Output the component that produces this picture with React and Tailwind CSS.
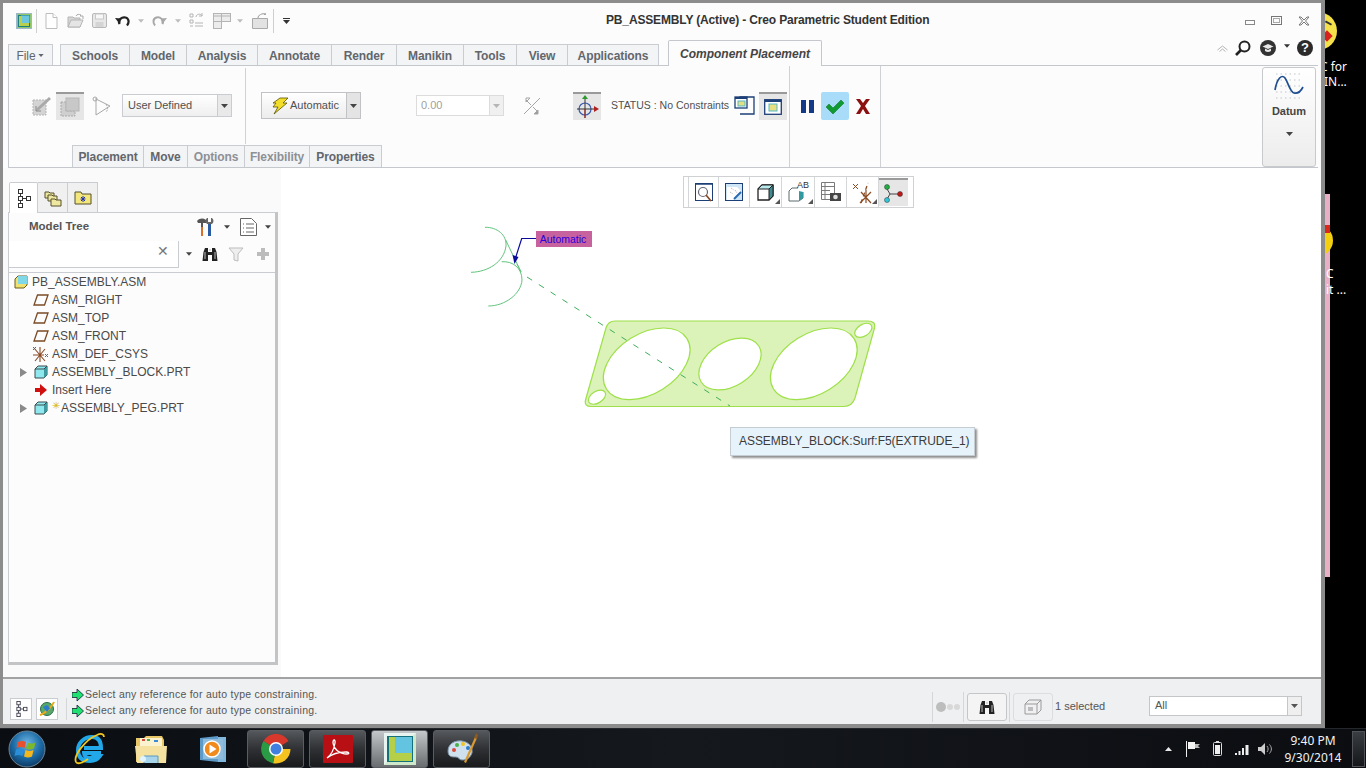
import React from "react";

const Caret = ({ c = "#444", w = 7, h = 4, className = "" }) => (
  <svg width={w} height={h} viewBox="0 0 7 4" className={className}><path d="M0 0h7L3.5 4z" fill={c} /></svg>
);

function CreoLogo({ size = 16 }) {
  return (
    <svg width={size} height={size} viewBox="0 0 16 16">
      <rect x="0.5" y="0.5" width="15" height="15" fill="#8fc66a" stroke="#9fb8c8" />
      <rect x="2" y="2" width="12" height="12" fill="#1c7f7f" />
      <rect x="5" y="2.5" width="8.5" height="7.5" fill="#6cc6e0" />
      <path d="M3 3v10h10v-3H6V3z" fill="#b9cf4e" />
    </svg>
  );
}

function Binoculars({ c = "#222" }) {
  return (
    <svg width="16" height="16" viewBox="0 0 16 16">
      <path d="M1.500 6L3 2h3v4h4V2h3l1.500 4 1 9H10V9H6v6H.5z" fill={c} />
      <path d="M3 6v7M13 6v7M7 4h2" stroke="#bbb" strokeWidth="1" />
    </svg>
  );
}

function TreeGlyph() {
  return (
    <svg width="14" height="19" viewBox="0 0 14 19" fill="none" stroke="#333">
      <rect x="1.5" y="0.5" width="4" height="4" />
      <rect x="1.5" y="7.5" width="4" height="4" />
      <rect x="1.5" y="14.5" width="4" height="4" />
      <rect x="9.5" y="7.5" width="4" height="4" />
      <path d="M3.5 4.5v3M3.5 11.5v3M5.5 9.5h4" />
    </svg>
  );
}

function Cube({ size = 14 }) {
  return (
    <svg width={size} height={size} viewBox="0 0 14 14">
      <path d="M1 4l3-3h9v9l-3 3H1z" fill="#8fe8ee" stroke="#3c4a4c" />
      <path d="M10 4v9l3-3V1z" fill="#3f9aa0" />
      <path d="M1 4h9l3-3" fill="none" stroke="#3c4a4c" />
    </svg>
  );
}

function PlaneIcon() {
  return (
    <svg width="16" height="12" viewBox="0 0 16 12" fill="none">
      <path d="M4.5 1H15l-3.5 10H1z" stroke="#7a4a24" strokeWidth="1.3" />
    </svg>
  );
}

function CsysIcon({ size = 17 }) {
  return (
    <svg width={size} height={size} viewBox="0 0 17 17" fill="none">
      <path d="M2 2l11 13M13 3L3 15M8 1v15M1 9h11" stroke="#8a4a24" strokeWidth="1.1" />
      <path d="M1 1l3 3M4 1L1 4M13 8l3 3M16 8l-3 3" stroke="#666" />
    </svg>
  );
}

function TreeRow({ icon, label, arrow, star }) {
  return (
    <div className="flex items-center h-[18px] pl-[10px]">
      <div className="w-[8px] flex justify-center">
        {arrow && <svg width="7" height="9" viewBox="0 0 7 9"><path d="M0 0l7 4.5L0 9z" fill="#8a8a8a" /></svg>}
      </div>
      <div className="ml-[4px] w-[19px] flex justify-center">{icon}</div>
      {star ? (
        <span className="ml-[2px] text-[10px] leading-none text-[#d8b400] w-[9px] -mt-1">✳</span>
      ) : (
        <span className="w-[2px]" />
      )}
      <span className="text-[12px] text-[#4a4a4a] whitespace-nowrap">{label}</span>
    </div>
  );
}

function QuickBar() {
  return (
    <div className="flex items-center h-full pl-[13px] pb-[2px]">
      <CreoLogo />
      <div className="w-px h-[24px] bg-[#cfcfcf] ml-[4px]" />
      <svg className="ml-[8px]" width="13" height="16" viewBox="0 0 13 16" fill="#fff" stroke="#bdbdbd"><path d="M1 .5h7l4 4v11H1z" /><path d="M8 .5v4h4" /></svg>
      <svg className="ml-[9px]" width="17" height="15" viewBox="0 0 17 15"><path d="M1 4h5l1 1h6v9H1z" fill="#d6d6d6" stroke="#b5b5b5" /><path d="M4 7h12l-3 7H1z" fill="#e5e5e5" stroke="#b5b5b5" /><path d="M9 3c1-2 3-2 5-1l-1 1h3v3" fill="none" stroke="#aaa" /></svg>
      <svg className="ml-[8px]" width="15" height="15" viewBox="0 0 15 15"><rect x=".5" y=".5" width="14" height="14" rx="1.5" fill="#e8e8e8" stroke="#b8b8b8" /><rect x="3.5" y="1" width="8" height="5" fill="#f7f7f7" stroke="#c8c8c8" /><rect x="3.5" y="9" width="8" height="5" fill="#d4d4d4" /></svg>
      <svg className="ml-[8px]" width="15" height="12" viewBox="0 0 15 12" fill="none"><path d="M4.5 9C2.5 5 7 1.5 10.5 2.5c3.5 1 4 5 1.500 8" stroke="#222" strokeWidth="2.2" /><path d="M0 3l6 0.500-1 6z" fill="#222" /></svg>
      <Caret c="#bdbdbd" w={6} h={4} className="ml-[8px]" />
      <svg className="ml-[8px]" width="15" height="12" viewBox="0 0 15 12" fill="none"><path d="M10.500 9C12.500 5 8 1.500 4.500 2.500c-3.500 1-4 5-1.500 8" stroke="#a8a8a8" strokeWidth="2" /><path d="M15 3l-6 .5 1 6z" fill="#a8a8a8" /></svg>
      <Caret c="#bdbdbd" w={6} h={4} className="ml-[8px]" />
      <svg className="ml-[8px]" width="15" height="17" viewBox="0 0 15 17" fill="none" stroke="#b4b4b4"><path d="M1 2h3v3H1zM1 8h3v3H1zM1 14h3M6 14h8M6 11h8M7 5c0-3 5-4 6-1M13 1v3h-3" /></svg>
      <svg className="ml-[9px]" width="18" height="16" viewBox="0 0 18 16" fill="#ececec" stroke="#b4b4b4"><rect x=".5" y=".5" width="9" height="8" /><rect x="8.500" y=".5" width="9" height="8" /><rect x=".5" y="8.500" width="8" height="7" /><path d="M1 3h8M9 3h8" /></svg>
      <Caret c="#bdbdbd" w={6} h={4} className="ml-[6px]" />
      <svg className="ml-[9px]" width="16" height="16" viewBox="0 0 16 16"><path d="M.5 5.500h15v10H.5z" fill="#e2e2e2" stroke="#aaa" /><path d="M6 5c0-3 4-5 8-4l-2 .5" fill="none" stroke="#999" /></svg>
      <div className="w-px h-[24px] bg-[#cfcfcf] ml-[5px]" />
      <div className="ml-[9px] flex flex-col items-center gap-[1px]">
        <div className="w-[7px] h-[1px] bg-[#333]" />
        <Caret c="#333" />
      </div>
    </div>
  );
}

function Tab({ w, children, dim }) {
  return (
    <div className={`h-[22px] ${w} flex items-center justify-center border-l border-t border-[#c9ccd0] bg-[#f3f4f5] text-[12px] tracking-[-0.1px] font-bold ${dim ? "text-[#8d9096]" : "text-[#62666d]"}`}>
      {children}
    </div>
  );
}

function TabRow() {
  return (
    <div className="h-[26px] flex items-end pl-[5px] pr-[5px] relative">
      <div className="absolute left-[5px] right-[3px] bottom-0 h-px bg-[#c4c7cb]" />
      <div className="flex border-r border-[#c9ccd0]"><Tab w="w-[44px]"><span className="flex items-center gap-[3px] font-normal">File <Caret c="#62666d" w={6} h={3} /></span></Tab></div>
      <div className="flex ml-[7px] border-r border-[#c9ccd0]">
        <Tab w="w-[69px]">Schools</Tab>
        <Tab w="w-[57px]">Model</Tab>
        <Tab w="w-[71px]">Analysis</Tab>
        <Tab w="w-[74px]">Annotate</Tab>
        <Tab w="w-[65px]">Render</Tab>
        <Tab w="w-[67px]">Manikin</Tab>
        <Tab w="w-[53px]">Tools</Tab>
        <Tab w="w-[51px]">View</Tab>
        <Tab w="w-[91px]">Applications</Tab>
      </div>
      <div className="relative ml-[9px] h-[26px] w-[154px] flex items-center justify-center border border-b-0 border-[#c4c7cb] bg-[#fcfcfc] rounded-t-[2px] text-[12px] font-bold italic text-[#454545]">
        Component Placement
      </div>
      <div className="flex items-center ml-auto h-[22px] mb-[7px] pr-[3px]">
        <svg width="11" height="7" viewBox="0 0 11 7" fill="none" stroke="#b5b5b5"><path d="M.5 5L5.500 1l5 4M2.500 6.500l3-2.500 3 2.500" /></svg>
        <svg className="ml-[7px]" width="16" height="16" viewBox="0 0 16 16" fill="none" stroke="#222"><circle cx="9.500" cy="6.500" r="5" strokeWidth="2" /><path d="M6 10l-5 5" strokeWidth="2.600" /></svg>
        <svg className="ml-[9px]" width="16" height="16" viewBox="0 0 16 16"><circle cx="8" cy="8" r="8" fill="#333" /><path d="M2.500 6.500L8 4l5.500 2.500L8 9z" fill="#e8e8e8" /><path d="M5 8.500v2.500c2 1.300 4 1.300 6 0V8.500L8 10z" fill="#e8e8e8" /></svg>
        <Caret c="#333" w={6} h={4} className="ml-[8px] -mt-[5px]" />
        <div className="ml-[7px] w-[16px] h-[16px] rounded-full bg-[#2b2b2b] text-white text-[13px] font-bold leading-[16px] text-center">?</div>
      </div>
    </div>
  );
}

function Pressed({ children }) {
  return (
    <div className="w-[28px] h-[28px] flex items-center justify-center bg-[#e6e6e7] border-t-2 border-[#9a9a9a]">{children}</div>
  );
}

function Ribbon() {
  return (
    <div className="h-[102px] flex ml-[5px] mr-[3px] border-l border-b border-[#c4c7cb] bg-[#fcfcfc]">
      <div className="w-[780px] flex flex-col">
        <div className="h-[79px] flex items-center">
          <svg className="ml-[23px]" width="20" height="20" viewBox="0 0 20 20"><path d="M1 4h13v15H1z" fill="#d4d4d4" stroke="#b5b5b5" strokeDasharray="2 1" /><path d="M5 12L17 1l2 2L7 14l-3 1z" fill="#a9a9a9" /><path d="M4 10v5h5" fill="none" stroke="#888" /></svg>
          <div className="ml-[4px]">
            <Pressed>
              <svg width="20" height="20" viewBox="0 0 20 20"><path d="M1 5h5v9h9v5H1z" fill="#cfcfcf" stroke="#aaa" strokeDasharray="2 1" /><rect x="6" y="1" width="13" height="13" fill="#c8c8c8" stroke="#b5b5b5" /></svg>
            </Pressed>
          </div>
          <svg className="ml-[8px]" width="20" height="20" viewBox="0 0 20 20" fill="none" stroke="#a8a8a8"><circle cx="3" cy="3" r="2" /><path d="M4 2v17M4 3l14 7-14 9" /><path d="M14 8c2 3 2 6 0 8" strokeDasharray="2 1" /></svg>
          <div className="ml-[10px] w-[110px] h-[23px] flex border border-[#c9ccd0] bg-gradient-to-b from-white to-[#efefef]">
            <span className="flex-1 px-[5px] text-[11px] leading-[21px] text-[#505050]">User Defined</span>
            <div className="w-[14px] border-l border-[#c9ccd0] bg-[#e9e9ea] flex items-center justify-center"><Caret /></div>
          </div>
          <div className="w-px h-[76px] ml-[13px] bg-[#cfd1d4]" />
          <div className="ml-[15px] w-[100px] h-[27px] flex border border-[#c0c2c6] bg-gradient-to-b from-white to-[#ececec]">
            <span className="flex-1 flex items-center pl-[9px] gap-[1px] text-[11px] text-[#505050]">
              <svg width="18" height="20" viewBox="0 0 18 18"><path d="M9 1h8L12 6h4L3 17l4-7H2l3-4H2z" fill="#f2de2a" stroke="#5a5200" strokeWidth=".8" /></svg>
              Automatic
            </span>
            <div className="w-[14px] border-l border-[#c0c2c6] bg-[#e4e4e5] flex items-center justify-center"><Caret /></div>
          </div>
          <div className="ml-[55px] w-[88px] h-[21px] flex border border-[#dcdcdc] bg-white">
            <span className="flex-1 pl-[4px] text-[11px] leading-[19px] text-[#a0a0a0]">0.00</span>
            <div className="w-[14px] border-l border-[#dcdcdc] bg-[#f0f0f0] flex items-center justify-center"><Caret c="#b5b5b5" /></div>
          </div>
          <svg className="ml-[19px]" width="18" height="18" viewBox="0 0 18 18" fill="none" stroke="#a5a5a5"><path d="M1 17L17 1" /><path d="M3 1h4L3 5zM3 3l5 5" /><path d="M15 17h-4l4-4zM15 15l-5-5" fill="#9b9b9b" /></svg>
          <div className="ml-[32px]">
            <Pressed>
              <svg width="24" height="26" viewBox="0 0 24 26" fill="none"><circle cx="10" cy="15" r="6" stroke="#3a5ab0" strokeWidth="1.200" /><path d="M10 2v22" stroke="#333" /><path d="M2 15h20" stroke="#333" /><path d="M7 5l3-4 3 4z" fill="#2a9a2a" /><path d="M19 12l5 3-5 3z" fill="#b02020" /><path d="M10 15v9" stroke="#b02020" /></svg>
            </Pressed>
          </div>
          <span className="ml-[10px] text-[10.5px] text-[#505050] w-[122px] whitespace-nowrap">STATUS : No Constraints</span>
          <svg className="ml-[1px]" width="21" height="19" viewBox="0 0 21 19" fill="none"><path d="M6 5V1h14v17H6" stroke="#1c3f77" strokeWidth="1.300" /><rect x="1" y="1" width="12" height="11" fill="#fff" stroke="#1c3f77" strokeWidth="1.300" /><rect x="1" y="1" width="12" height="2" fill="#1c3f77" /><rect x="4" y="5" width="7" height="5" fill="#e6df80" stroke="#55b8c8" /></svg>
          <div className="ml-[4px]">
            <Pressed>
              <svg width="18" height="16" viewBox="0 0 18 16"><rect x=".7" y=".7" width="16.600" height="14.600" fill="#fff" stroke="#1c3f77" strokeWidth="1.300" /><rect x="1" y="1" width="16" height="2" fill="#1c3f77" /><rect x="5" y="5" width="8" height="7" fill="#e6df80" stroke="#55b8c8" /></svg>
            </Pressed>
          </div>
        </div>
        <div className="flex-1 flex items-end pl-[63px]">
          <div className="flex border-r border-[#c9ccd0]">
            <Tab w="w-[71px]">Placement</Tab>
            <Tab w="w-[44px]">Move</Tab>
            <Tab w="w-[57px]" dim>Options</Tab>
            <Tab w="w-[65px]" dim>Flexibility</Tab>
            <Tab w="w-[72px]">Properties</Tab>
          </div>
        </div>
      </div>
      <div className="w-[92px] border-l border-r border-[#cfd1d4] flex items-start pt-[26px]">
        <div className="ml-[11px] mt-[8px] flex gap-[3px]">
          <div className="w-[5px] h-[13px] bg-[#133a86]" />
          <div className="w-[5px] h-[13px] bg-[#133a86]" />
        </div>
        <div className="ml-[7px] w-[28px] h-[28px] rounded-[2px] bg-[#a9dcf8] flex items-center justify-center">
          <svg width="20" height="15" viewBox="0 0 20 15"><path d="M1 8l3-3 4 4 8-8 3 3-11 11z" fill="#0f9a32" stroke="#0b6a20" strokeWidth=".5" /></svg>
        </div>
        <svg className="ml-[6px] mt-[7px]" width="16" height="15" viewBox="0 0 16 15"><path d="M1 0h4l3 4 3-4h4l-5 7 5 8h-4l-3-5-3 5H1l5-8z" fill="#8c1010" /></svg>
      </div>
      <div className="flex-1" />
      <div className="w-[54px] mt-[1px] mr-[2px] rounded-[3px] border border-[#c8c9cc] bg-gradient-to-b from-white to-[#ececec] flex flex-col items-center">
        <svg className="mt-[4px]" width="30" height="28" viewBox="0 0 30 28" fill="none">
          <path d="M2 2h26M2 8h26M2 14h26M2 20h26M2 26h26" stroke="#c0c4c8" strokeDasharray="1.500 3" />
          <path d="M1 18C3 6 8 2 11 6s5 14 9 15 7-2 9-6" stroke="#1f4f92" strokeWidth="1.700" />
        </svg>
        <span className="mt-[3px] text-[11px] font-bold text-[#444]">Datum</span>
        <Caret className="mt-[12px]" c="#444" />
      </div>
    </div>
  );
}

function TreePanel() {
  return (
    <div className="w-[278px] bg-[#fafafa] pl-[5px] pt-[14px] pb-[12px] flex flex-col">
      <div className="flex h-[30px] pl-[1px]">
        <div className="w-[29px] h-[31px] flex items-center justify-center border border-b-0 border-[#c9ccd0] rounded-t-[2px] bg-white z-10"><TreeGlyph /></div>
        <div className="w-[30px] flex items-center justify-center border-t border-r border-[#c9ccd0] bg-[#f0f0f1]">
          <svg width="18" height="18" viewBox="0 0 18 18" fill="#efe7a0" stroke="#55502a"><path d="M1 3h4l1 1h4v5H1z" /><path d="M4 6h4l1 1h4v5H4z" /><path d="M7 10h4l1 1h5v6H7z" /></svg>
        </div>
        <div className="w-[30px] flex items-center justify-center border-t border-r border-[#c9ccd0] bg-[#f0f0f1]">
          <svg width="18" height="15" viewBox="0 0 18 15"><path d="M1 2h6l1 2h9v10H1z" fill="#f3e67a" stroke="#55502a" /><path d="M9 6v6M6.500 9h5M7 7l4 4M11 7l-4 4" stroke="#2233aa" /></svg>
        </div>
      </div>
      <div className="flex-1 w-[270px] flex flex-col border-l border-t border-[#c9ccd0] border-r-[3px] border-b-[3px] border-r-[#c2c4c6] border-b-[#c2c4c6] bg-[#fcfcfc]">
        <div className="h-[28px] flex items-center">
          <span className="ml-[20px] text-[11.500px] font-bold text-[#555]">Model Tree</span>
          <svg className="ml-[107px]" width="20" height="20" viewBox="0 0 20 20"><path d="M1 4c3-3 6-3 9-1v3H7v13H5V6H2z" fill="#555" /><path d="M5 10h2v9H5z" fill="#d8702a" /><path d="M12 6h3v13h-3z" fill="#2a5aa0" /><path d="M11 1h1v4h3V1h1c2 2 2 4 0 6h-5c-2-2-2-4 0-6z" fill="#666" /></svg>
          <Caret c="#444" w={6} h={4} className="ml-[8px]" />
          <svg className="ml-[10px]" width="17" height="18" viewBox="0 0 17 18" fill="#fff" stroke="#666"><path d="M.5.5h11l5 5v12H.5z" /><path d="M3 6h1M6 6h8M3 10h1M6 10h8M3 14h1M6 14h8" /></svg>
          <Caret c="#444" w={6} h={4} className="ml-[8px]" />
        </div>
        <div className="h-[32px] flex items-center border-b border-[#c9ccd0] pb-[5px]">
          <div className="w-[170px] h-[27px] bg-white border-r border-b border-[#c9ccd0] flex justify-end pr-[9px] pt-[2px] text-[#777] text-[14px] leading-[16px]">✕</div>
          <Caret c="#444" w={6} h={4} className="ml-[7px]" />
          <div className="ml-[10px] flex"><Binoculars /></div>
          <svg className="ml-[10px]" width="16" height="15" viewBox="0 0 16 15" fill="#eee" stroke="#bdbdbd"><path d="M1 1h14L10 7v7l-4-1V7z" /></svg>
          <svg className="ml-[13px]" width="12" height="12" viewBox="0 0 12 12"><path d="M4 0h4v4h4v4H8v4H4V8H0V4h4z" fill="#bcbcbc" /></svg>
        </div>
        <div>
          <div className="flex items-center h-[18px] pl-[5px]">
            <svg width="14" height="14" viewBox="0 0 14 14"><path d="M1 4l3-3h9v9l-3 3H1z" fill="#f0e070" stroke="#6a5a18" /><path d="M4 1v8h9V1z" fill="#7fd8e8" /></svg>
            <span className="ml-[4px] text-[12px] text-[#4a4a4a]">PB_ASSEMBLY.ASM</span>
          </div>
          <TreeRow icon={<PlaneIcon />} label="ASM_RIGHT" />
          <TreeRow icon={<PlaneIcon />} label="ASM_TOP" />
          <TreeRow icon={<PlaneIcon />} label="ASM_FRONT" />
          <TreeRow icon={<CsysIcon />} label="ASM_DEF_CSYS" />
          <TreeRow arrow icon={<Cube />} label="ASSEMBLY_BLOCK.PRT" />
          <TreeRow icon={<svg width="12" height="12" viewBox="0 0 12 12"><path d="M0 4h5V0l7 6-7 6V8H0z" fill="#d01010" /></svg>} label="Insert Here" />
          <TreeRow arrow star icon={<Cube />} label="ASSEMBLY_PEG.PRT" />
        </div>
      </div>
    </div>
  );
}

const Corner = () => (
  <svg className="absolute right-[1px] bottom-[3px]" width="5" height="5" viewBox="0 0 5 5"><path d="M5 0v5H0z" fill="#555" /></svg>
);

function GraphicsBar() {
  const cell = "flex items-center justify-center border-r border-[#d5d6d8] h-full";
  return (
    <div className="absolute left-[402px] top-[8px] h-[32px] w-[231px] flex items-center border border-[#d0d1d3] bg-white pl-[4px] pr-[5px]">
      <div className={`${cell} w-[31px] border-l`}>
        <svg width="18" height="19" viewBox="0 0 18 19" fill="none"><rect x=".5" y=".5" width="17" height="17" stroke="#1c3f77" /><path d="M1 1h16" stroke="#1c3f77" strokeWidth="1.500" /><circle cx="8" cy="9" r="4.500" stroke="#667" strokeWidth="1.200" /><path d="M11 12l5 6" stroke="#8a4a24" strokeWidth="1.700" /></svg>
      </div>
      <div className={`${cell} w-[31px]`}>
        <svg width="18" height="18" viewBox="0 0 18 18"><rect x=".5" y=".5" width="17" height="17" fill="#cfe6f6" stroke="#1c3f77" /><path d="M2 4h10l4 4-8 9H2z" fill="#fff" /><path d="M6 5l3 2M10 7l2 3M5 9l3 2" stroke="#aaa" strokeDasharray="1 1" /><path d="M9 16l7-7" stroke="#2a6ab0" strokeWidth="2" /></svg>
      </div>
      <div className={`${cell} w-[32px] relative`}>
        <svg width="17" height="17" viewBox="0 0 17 17"><path d="M1 5l4-4h11v11l-4 4H1z" fill="#fff" stroke="#222" strokeWidth="1.300" /><path d="M1 5h11l4-4H5z" fill="#b7e8ec" stroke="#222" /><path d="M12 5v11l4-4V1z" fill="#3f8a90" stroke="#222" /></svg>
        <Corner />
      </div>
      <div className={`${cell} w-[33px] relative`}>
        <svg width="21" height="19" viewBox="0 0 21 19" fill="none"><path d="M1 8l3-3h6M1 8v10h10l4-3V9" stroke="#5a6a6c" /><path d="M11 8v10l4-3V9z" fill="#2f9aa0" /></svg>
        <span className="absolute left-[15px] top-[4px] text-[9px] leading-none text-[#333]">AB</span>
        <Corner />
      </div>
      <div className={`${cell} w-[32px]`}>
        <svg width="20" height="20" viewBox="0 0 20 20" fill="none"><path d="M.5.5h13v17H.5zM1 4.500h12M1 8.500h8M1 12.500h8M4 1v16" stroke="#7a7a7a" /><rect x="9" y="11" width="11" height="8" fill="#444" /><circle cx="14.500" cy="15" r="2.300" fill="#ddd" /></svg>
      </div>
      <div className={`${cell} w-[32px] relative`}>
        <svg width="22" height="23" viewBox="0 0 22 23" fill="none"><path d="M9 22L16 2" stroke="#8a4a24" strokeDasharray="4 3" strokeWidth="1.300" /><path d="M9 11l10 11M19 11L8 22M14 9v13" stroke="#8a4a24" strokeWidth="1.200" /><path d="M1 3l5 5M6 3L1 8" stroke="#8a4a24" /></svg>
        <Corner />
      </div>
      <div className="w-[29px] h-[28px] flex items-center justify-center bg-[#e6e6e7] border-t-2 border-[#9a9a9a]">
        <svg width="20" height="21" viewBox="0 0 20 21" fill="none"><path d="M3 6l3 5-3 5M6 11h9" stroke="#444" /><circle cx="3" cy="4" r="2.500" fill="#20b040" stroke="#333" strokeWidth=".5" /><circle cx="3" cy="17" r="2.500" fill="#30c8d8" stroke="#333" strokeWidth=".5" /><circle cx="16" cy="11" r="2.500" fill="#c01818" stroke="#333" strokeWidth=".5" /></svg>
      </div>
    </div>
  );
}

function ModelSketch() {
  return (
    <svg className="absolute left-0 top-0" width="1040" height="509" viewBox="281 168 1040 509" fill="none">
      <path
        d="M615 321H868Q876 321 874.500 328L855 398Q852 406.500 844 406.500H591Q584 406.500 585.500 400L606 328Q608 321 615 321Z"
        fill="#dbf2b8"
        stroke="#9ee04a"
        strokeWidth="1.200"
      />
      {[
        [646.7, 363.8, 47.5, 30],
        [730, 364, 34, 22],
        [813.8, 363.8, 47.5, 30],
        [863.3, 330.3, 9.5, 5.8],
        [597, 397.2, 9.5, 5.8],
      ].map(([cx, cy, rx, ry]) => (
        <ellipse key={cx} cx={cx} cy={cy} rx={rx} ry={ry} transform={`rotate(-32 ${cx} ${cy})`} fill="#fff" stroke="#9ee04a" strokeWidth="1.200" />
      ))}
      <path d="M527 277L730 406" stroke="#3fae5c" strokeDasharray="6 8" />
      <path d="M485 227.300C497 227 507 235 506 246C504 262 488 272 471 272.300" stroke="#62c47c" />
      <path d="M501.700 261.700C513 261 522 268 522 280C521 294 505 306 488.300 306" stroke="#62c47c" />
      <path d="M505.700 240L521 272M517 264L521 272" stroke="#62c47c" />
      <path d="M536 238.500H521.700L515.500 258" stroke="#0a0a9a" strokeWidth="1.200" />
      <path d="M512.500 255L518.500 257L514.500 264Z" fill="#0a0a9a" />
    </svg>
  );
}

function Canvas() {
  return (
    <div className="flex-1 bg-white relative">
      <GraphicsBar />
      <ModelSketch />
      <div className="absolute left-[255px] top-[63px] w-[56px] h-[16px] bg-[#c8629f] text-[#2a00d8] text-[10.500px] leading-[16px] pr-[2px] text-center">Automatic</div>
      <div className="absolute left-[449px] top-[259px] w-[245px] h-[29px] bg-[#e6f3fb] border border-[#c6cdd2] shadow-[2px_2px_2px_#8f8f8f] text-[12px] tracking-[-0.06px] leading-[26px] pl-[8px] text-[#3b3b3b] whitespace-nowrap">
        ASSEMBLY_BLOCK:Surf:F5(EXTRUDE_1)
      </div>
    </div>
  );
}

function MsgLine() {
  return (
    <div className="flex items-center h-[16px]">
      <svg width="12" height="12" viewBox="0 0 12 12"><path d="M0 3.500h5V0l6.500 6L5 12V8.500H0z" fill="#1fe070" stroke="#123" strokeWidth=".8" /></svg>
      <span className="ml-[1px] text-[10.500px] tracking-[0.26px] text-[#555] whitespace-nowrap">Select any reference for auto type constraining.</span>
    </div>
  );
}

function StatusBar() {
  return (
    <div className="h-[47px] border-t-2 border-[#a2a2a2] bg-[#eef0f1] flex relative">
      <div className="flex items-end pb-[4px] pl-[7px]">
        <div className="w-[22px] h-[22px] border border-[#c9ccd0] bg-white flex items-center justify-center">
          <svg width="13" height="16" viewBox="0 0 14 19" fill="none" stroke="#334"><rect x="1.500" y=".5" width="4" height="4" /><rect x="1.500" y="7.500" width="4" height="4" /><rect x="1.500" y="14.500" width="4" height="4" /><rect x="9.500" y="7.500" width="4" height="4" /><path d="M3.500 4.500v3M3.500 11.500v3M5.500 9.500h4" /></svg>
        </div>
        <div className="w-[22px] h-[22px] ml-[4px] border border-[#c9ccd0] bg-white flex items-center justify-center">
          <svg width="18" height="18" viewBox="0 0 18 18"><circle cx="9" cy="9" r="6.500" fill="#58a86a" stroke="#2a6a4a" /><path d="M2 15C6 14 14 7 16 2" stroke="#e8a818" strokeWidth="2" fill="none" /><path d="M5 7l4-2 3 3-3 4z" fill="#2a7ad0" /></svg>
        </div>
        <div className="w-px h-[22px] ml-[8px] bg-[#d5d6d8]" />
      </div>
      <div className="ml-[5px] pt-[8px] flex flex-col">
        <MsgLine />
        <MsgLine />
      </div>
      <div className="flex-1" />
      <div className="flex items-center h-full pt-[10px]">
        <div className="w-px h-[30px] bg-[#d5d6d8]" />
        <div className="ml-[3px] flex items-center gap-[1px] w-[27px]">
          <div className="w-[10px] h-[10px] rounded-full bg-[#bdbdbd]" />
          <div className="w-[6px] h-[6px] rounded-full bg-[#d8d8d8]" />
          <div className="w-[6px] h-[6px] rounded-full bg-[#d8d8d8]" />
        </div>
        <div className="w-px h-[30px] bg-[#d5d6d8]" />
        <div className="ml-[3px] w-[40px] h-[28px] rounded-[3px] border border-[#c4c6c8] bg-[#f4f4f5] flex items-center justify-center"><Binoculars /></div>
        <div className="ml-[2px] w-px h-[30px] bg-[#d5d6d8]" />
        <div className="ml-[3px] w-[40px] h-[28px] rounded-[3px] border border-[#dcdde0] bg-[#eff0f1] flex items-center justify-center">
          <svg width="18" height="16" viewBox="0 0 18 16" fill="none" stroke="#9a9a9a"><path d="M1 5l4-4h12v10l-4 4H1zM1 5h12l4-4M13 5v10" /><rect x="4" y="8" width="5" height="4" fill="#bcbcbc" stroke="none" /></svg>
        </div>
        <span className="ml-[2px] w-[94px] text-[11px] text-[#555]">1 selected</span>
        <div className="w-[153px] h-[20px] -mt-[2px] flex border border-[#c4c6c8] bg-white mr-[19px]">
          <span className="flex-1 pl-[5px] text-[11px] leading-[17px] text-[#555]">All</span>
          <div className="w-[14px] border-l border-[#c4c6c8] bg-[#efefef] flex items-center justify-center"><Caret c="#555" /></div>
        </div>
      </div>
    </div>
  );
}

function DesktopStrip() {
  return (
    <div className="flex-1 bg-black relative overflow-hidden">
      <div className="absolute left-[-26px] top-[12px] w-[38px] h-[38px] rounded-full bg-[#f4e04a]" />
      <div className="absolute left-[-2px] top-[32px] w-[8px] h-[8px] rotate-45 bg-[#d8201c]" />
      <div className="absolute left-[0px] top-[22px] w-[7px] h-[2px] bg-[#333] rotate-[30deg]" />
      <div className="absolute left-[-5px] top-[59px] text-[12px] leading-[15px] text-white font-['Noto_Sans',sans-serif] whitespace-nowrap">C for</div>
      <div className="absolute left-[-1px] top-[74px] text-[12px] leading-[15px] text-white font-['Noto_Sans',sans-serif] whitespace-nowrap">IN...</div>
      <div className="absolute left-0 top-[194px] w-[5px] h-[383px] bg-[#e9afc6]" />
      <div className="absolute left-[-24px] top-[225px] w-[32px] h-[31px] rounded-full bg-[#f4cf10]" />
      <div className="absolute left-[0px] top-[225px] w-[5px] h-[8px] bg-[#d8281c]" />
      <div className="absolute left-0 top-[266px] text-[12px] leading-[16px] text-white font-['Noto_Sans',sans-serif] whitespace-nowrap pl-[1px]">C<br />it ...</div>
    </div>
  );
}

function TaskButton({ children, active }) {
  return (
    <div className={`w-[57px] h-[38px] flex items-center justify-center rounded-[3px] border border-[#5a5d62] ${active ? "bg-gradient-to-b from-[#c5c8cb] to-[#6a6d70]" : "bg-gradient-to-b from-[#55585c] via-[#2f3134] to-[#191a1c]"}`}>
      {children}
    </div>
  );
}

function Taskbar() {
  return (
    <div className="h-[40px] flex items-center border-t border-[#24272c] bg-gradient-to-r from-[#0a0d12] via-[#15181d] to-[#0b0d11] relative">
      <svg className="ml-[8px]" width="38" height="38" viewBox="0 0 38 38">
        <defs>
          <radialGradient id="orb" cx="50%" cy="35%" r="65%"><stop offset="0" stopColor="#6fb6e4" /><stop offset="0.6" stopColor="#1b6aa5" /><stop offset="1" stopColor="#0d3a64" /></radialGradient>
        </defs>
        <circle cx="19" cy="19" r="18" fill="url(#orb)" stroke="#6d8596" />
        <path d="M10 12c3-1.500 5-1.500 8 0l-1.500 6c-3-1.300-5-1.300-8 0z" fill="#e8502e" />
        <path d="M19.500 12.500c3 1.500 5 1.500 8 0L26 18.500c-3 1.300-5 1.300-8 0z" fill="#7cb82a" />
        <path d="M8 19.500c3-1.300 5-1.300 8 0L14.500 26c-3-1.500-5-1.500-8 0z" fill="#2a8ed8" />
        <path d="M17.500 20c3 1.300 5 1.300 8 0L24 26.500c-3 1.300-5 1.300-8 0z" fill="#f4b81c" />
      </svg>
      <svg className="ml-[27px]" width="32" height="34" viewBox="0 0 32 34" fill="none">
        <path d="M11 16h17c0-7-3-11-9-11C11 5 5 11 5 18c0 8 5 11 12 11 5 0 8-2 10-5h-6c-1 1-2 2-4 2-3 0-6-2-6-5h17" stroke="#22a8e8" strokeWidth="4" />
        <path d="M3 30C0 24 12 8 24 3c4-2 7-1 7 2" stroke="#f0c820" strokeWidth="1.800" />
        <path d="M3 30c2 3 8 0 12-3" stroke="#f0c820" strokeWidth="1.800" />
      </svg>
      <svg className="ml-[29px]" width="34" height="30" viewBox="0 0 34 30">
        <path d="M2 4h8l2-2h16l2 4v22H2z" fill="#e9c768" />
        <path d="M6 4h22v8H6z" fill="#fbf3d0" />
        <rect x="8" y="5" width="3" height="2" fill="#d84a3a" />
        <rect x="13" y="5" width="3" height="2" fill="#4ab04a" />
        <rect x="20" y="6" width="4" height="2" fill="#3a8ad8" />
        <path d="M1 12h32l-1 17H3z" fill="#f6e2a0" />
        <path d="M10 29v-7h14v7" fill="#a8d4ec" stroke="#5a9ac0" />
        <circle cx="9" cy="25" r="3" fill="#dff4ff" />
      </svg>
      <svg className="ml-[31px]" width="28" height="28" viewBox="0 0 28 28">
        <path d="M1 3l18-2v26L1 25z" fill="#5d9ac8" />
        <path d="M19 2h8v25h-8z" fill="#7fb8dc" />
        <rect x="4" y="4" width="20" height="20" fill="#8fbcdc" />
        <circle cx="13" cy="14" r="8" fill="#f08a1c" stroke="#fff" strokeWidth="1.500" />
        <path d="M10.500 9.500l7 4.500-7 4.500z" fill="#fff" />
      </svg>
      <div className="ml-[20px] flex gap-[5px] pt-[1px]">
        <TaskButton>
          <svg width="30" height="30" viewBox="0 0 30 30">
            <path d="M15 15L2.500 7A14.500 14.500 0 0 1 27.500 7z" fill="#d8382c" />
            <path d="M15 15H29.500A14.500 14.500 0 0 1 12 29.200z" fill="#f4c320" />
            <path d="M15 15L12 29.200A14.500 14.500 0 0 1 2.500 7z" fill="#2a9a44" />
            <circle cx="15" cy="15" r="7" fill="#fff" />
            <circle cx="15" cy="15" r="5.500" fill="#3f7fe0" />
          </svg>
        </TaskButton>
        <TaskButton>
          <svg width="30" height="28" viewBox="0 0 30 28">
            <rect width="30" height="28" rx="1" fill="#b80f14" />
            <path d="M4 23c4-3 7-9 8-15 .5-4-2-4-2 0 1 6 6 11 14 11 3 0 2-2-1-2-6 0-14 2-19 6z" fill="none" stroke="#fff" strokeWidth="1.300" />
          </svg>
        </TaskButton>
        <TaskButton active>
          <svg width="32" height="32" viewBox="0 0 32 32">
            <rect x="0" y="0" width="32" height="32" fill="#e8f4f0" />
            <path d="M0 32l32-32v32z" fill="#bfe0b0" opacity=".6" />
            <rect x="3" y="3" width="26" height="26" fill="#14707a" />
            <rect x="10" y="4" width="18" height="16" fill="#62c4e0" />
            <path d="M5 4v24h23v-8H11V4z" fill="#b6cf48" />
          </svg>
        </TaskButton>
        <TaskButton>
          <svg width="32" height="32" viewBox="0 0 32 32">
            <path d="M2 18C2 10 10 7 16 8c7 1 11 6 10 12-2 5-5 7-10 7-3 0-3-3-6-3-4 0-8 0-8-6z" fill="#cfe0ee" stroke="#7a94a8" />
            <circle cx="8" cy="17" r="2" fill="#d84a3a" />
            <circle cx="11" cy="12" r="2" fill="#4ab04a" />
            <circle cx="17" cy="11" r="2" fill="#f4c320" />
            <circle cx="22" cy="15" r="2" fill="#2a7ad0" />
            <path d="M18 29L29 4l2 1L20 30z" fill="#d89a30" />
            <path d="M28 5l2-5 2 2-1 4z" fill="#8a5a20" />
          </svg>
        </TaskButton>
      </div>
      <div className="flex-1" />
      <div className="flex items-center h-full">
        <svg width="7" height="4" viewBox="0 0 7 4"><path d="M0 4h7L3.500 0z" fill="#e8e8e8" /></svg>
        <svg className="ml-[14px]" width="14" height="16" viewBox="0 0 14 16"><path d="M.5 0v16" stroke="#eee" /><path d="M2 1h7v7H2z" fill="#f4f4f4" /><path d="M9 3h5l-2 2 2 2H9z" fill="#bbb" /></svg>
        <svg className="ml-[13px]" width="9" height="15" viewBox="0 0 9 15"><rect x="3" y="0" width="3" height="2" fill="#ddd" /><rect x=".5" y="1.500" width="8" height="13" rx="1" fill="none" stroke="#ddd" /><rect x="2" y="4" width="5" height="9" fill="#eee" /></svg>
        <svg className="ml-[13px]" width="15" height="12" viewBox="0 0 15 12"><path d="M0 10h2v2H0zM3.500 8h2v4h-2zM7 5h2v7H7zM10.500 2h3v10h-3z" fill="#eee" /></svg>
        <svg className="ml-[8px]" width="15" height="12" viewBox="0 0 15 12" fill="none"><path d="M0 4h3l4-4v12L3 8H0z" fill="#ccc" /><path d="M9 3c1.500 2 1.500 4 0 6M11.500 1.500c2.500 3 2.500 6 0 9" stroke="#aaa" /></svg>
        <div className="ml-[10px] w-[60px] text-center text-[12px] leading-[17px] text-[#f2f2f2] font-['Noto_Sans',sans-serif]">
          <div>9:40 PM</div>
          <div>9/30/2014</div>
        </div>
        <div className="ml-[9px] w-[13px] h-[36px] border border-[#50545a] bg-gradient-to-b from-[#3a3d42] to-[#15171a] mr-[1px]" />
      </div>
    </div>
  );
}

export default function App() {
  return (
    <div className="w-[1366px] h-[768px] flex flex-col overflow-hidden bg-black font-['Liberation_Sans',Arial,sans-serif]">
      <div className="h-[728px] flex">
        <div className="w-[1325px] h-full flex flex-col border-[#8c8c8c] border-l-[3px] border-t-[3px] border-r-4 border-b-4 bg-[#fcfcfc]">
          <div className="h-[37px] flex items-center relative">
            <QuickBar />
            <span className="ml-[316px] -mt-[4px] text-[12px] tracking-[-0.15px] font-bold text-[#333] whitespace-nowrap">PB_ASSEMBLY (Active) - Creo Parametric Student Edition</span>
            <div className="ml-auto flex items-center gap-[16px] pr-[11px] -mt-[2px]">
              <div className="w-[10px] h-[5px] mt-[4px] border border-[#888]" />
              <div className="w-[11px] h-[9px] border border-[#777] p-[1px]"><div className="w-full h-full border border-[#aaa]" /></div>
              <svg width="12" height="10" viewBox="0 0 12 10" fill="none" stroke="#777"><path d="M1 1h2l3 3 3-3h2L7.500 5 11 9H9L6 6 3 9H1l3.500-4z" /></svg>
            </div>
          </div>
          <TabRow />
          <Ribbon />
          <div className="flex-1 flex min-h-0">
            <TreePanel />
            <Canvas />
          </div>
          <StatusBar />
        </div>
        <DesktopStrip />
      </div>
      <Taskbar />
    </div>
  );
}
